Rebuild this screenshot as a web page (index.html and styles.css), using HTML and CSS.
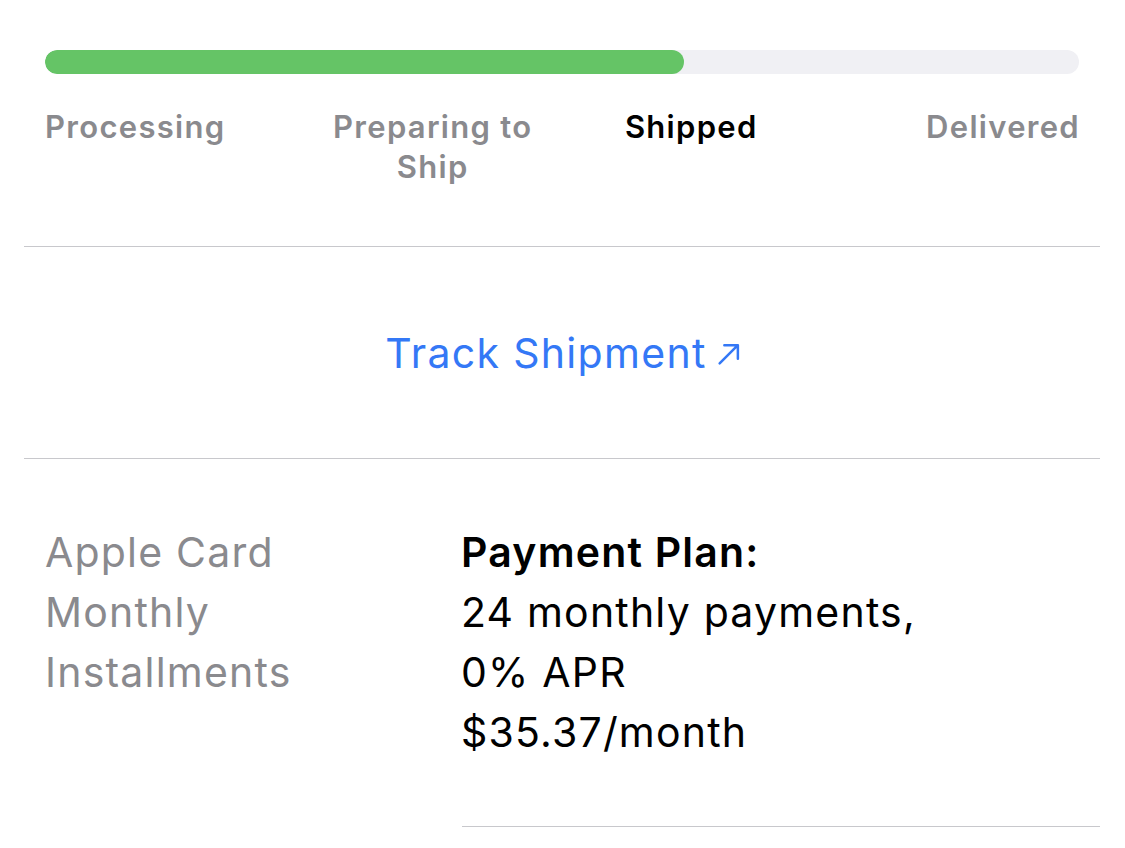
FILE: index.html
```html
<!DOCTYPE html>
<html lang="en">
<head>
<meta charset="utf-8">
<title>Order Status</title>
<link rel="stylesheet" href="styles.css">
</head>
<body>
<main class="page">
  <section class="progress-section">
    <div class="track"><div class="fill" style="width: 61.8%"></div></div>
    <div class="steps">
      <div class="step step-left">Processing</div>
      <div class="step step-center">Preparing to Ship</div>
      <div class="step step-center step-active">Shipped</div>
      <div class="step step-right">Delivered</div>
    </div>
  </section>
  <section class="track-section">
    <a class="track-link" href="#">Track Shipment<svg class="arrow" viewBox="0 0 24 24" width="24" height="24" aria-hidden="true"><path d="M3.5 21.5 L20.5 4.5 M8 4 H21 V17" fill="none" stroke="currentColor" stroke-width="2.4" stroke-linecap="round" stroke-linejoin="round"/></svg></a>
  </section>
  <section class="payment-section">
    <div class="pay-label">Apple Card<br>Monthly<br>Installments</div>
    <div class="pay-value">
      <div class="pay-title">Payment Plan:</div>
      <div>24 monthly payments,</div>
      <div>0% APR</div>
      <div>$35.37/month</div>
    </div>
  </section>
  <div class="end-rule"></div>
</main>
</body>
</html>
```

FILE: styles.css
```css
html, body {
  margin: 0;
  padding: 0;
  background: #ffffff;
}
body {
  font-family: "Inter", "Noto Sans", "Liberation Sans", sans-serif;
  color: #000000;
  -webkit-font-smoothing: antialiased;
}
.page {
  padding: 0 25px 0 24px;
}
.progress-section {
  padding: 50px 21px 59px 21px;
  border-bottom: 1px solid #c8c8cc;
}
.track {
  height: 24px;
  border-radius: 12px;
  background: #f0f0f4;
  overflow: hidden;
}
.fill {
  height: 100%;
  border-radius: 12px;
  background: #65c466;
}
.steps {
  display: grid;
  grid-template-columns: repeat(4, 1fr);
  margin-top: 33px;
}
.step {
  font-size: 31px;
  line-height: 40px;
  font-weight: 600;
  color: #8a8a8e;
  letter-spacing: 1.3px;
}
.step-left { text-align: left; }
.step-center { text-align: center; padding: 0 8px; }
.step-right { text-align: right; margin-right: -1px; }
.step-active { color: #000000; }
.track-section {
  display: flex;
  justify-content: center;
  align-items: center;
  height: 211px;
  border-bottom: 1px solid #c8c8cc;
}
.track-link {
  display: flex;
  align-items: center;
  gap: 9px;
  font-size: 41px;
  line-height: 60px;
  color: #3478f6;
  text-decoration: none;
  letter-spacing: 1.3px;
  margin-left: 2px;
}
.arrow {
  width: 25px;
  height: 25px;
  margin-top: 2px;
}
.payment-section {
  display: grid;
  grid-template-columns: 415px 1fr;
  padding: 63px 0 64px 22px;
  font-size: 41px;
  line-height: 60px;
  letter-spacing: 1.2px;
}
.pay-label {
  color: #8a8a8e;
  margin-left: -1px;
}
.pay-title {
  font-weight: 600;
}
.end-rule {
  margin-left: 438px;
  border-top: 1px solid #c8c8cc;
}
```
